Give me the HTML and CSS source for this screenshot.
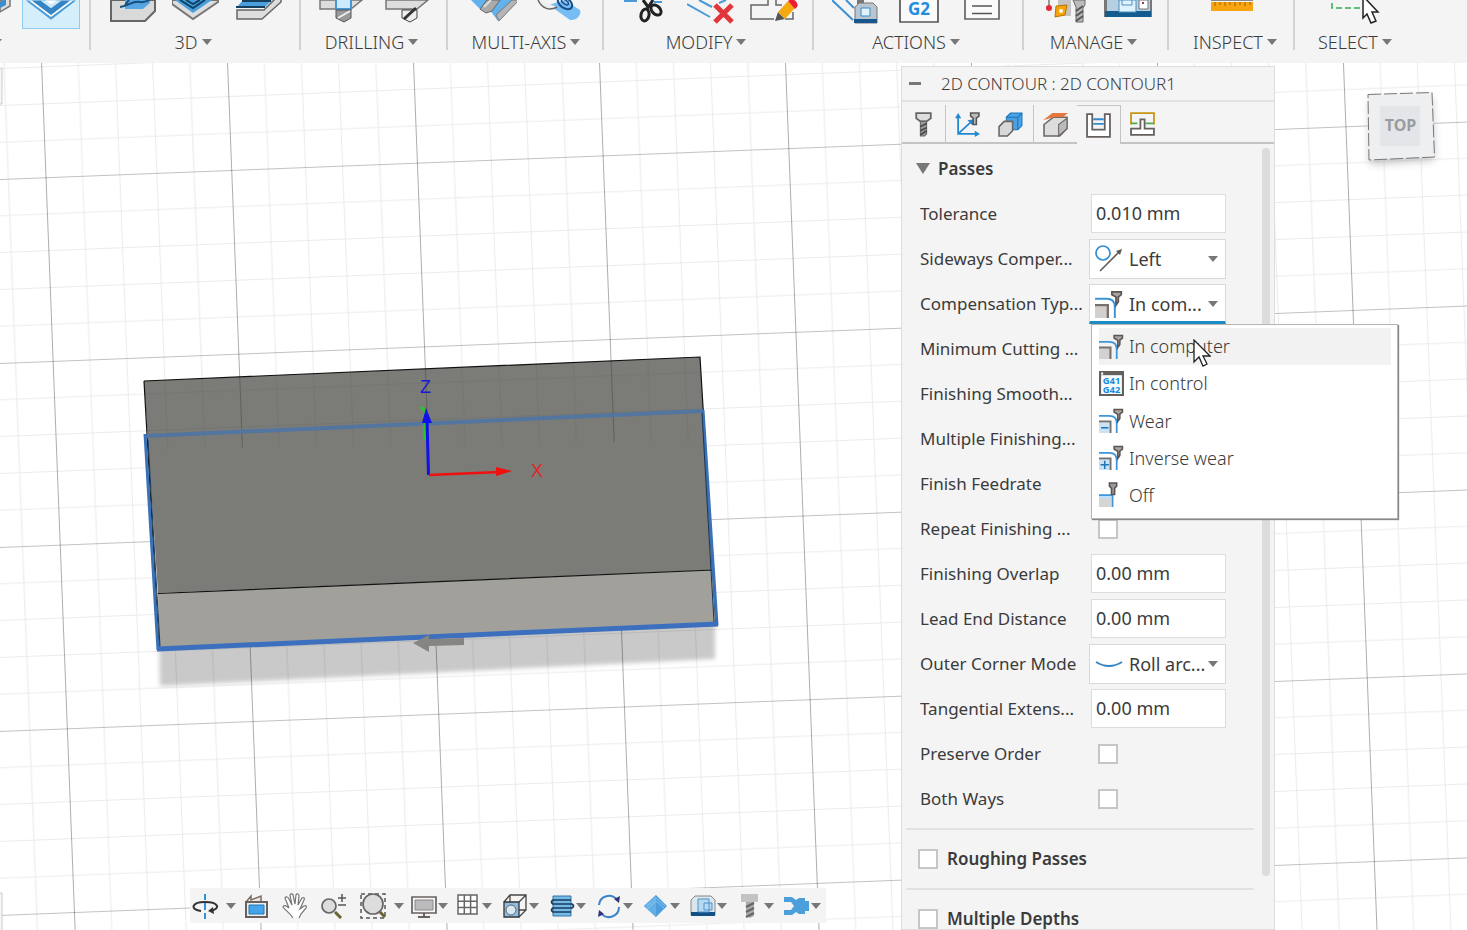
FILE: index.html
```html
<!DOCTYPE html>
<html lang="en">
<head>
<meta charset="utf-8">
<title>2D Contour</title>
<link rel="stylesheet" href="styles.css">
</head>
<body>
<svg class="defs" aria-hidden="true">
  <defs>
    <symbol id="holder" viewBox="0 0 24 24"><path d="M14.500 1.500h8v2.500l-2.500 2v4l-2 3v-7l-3.500-2z" fill="#aaa4a0" stroke="#5b5653" stroke-width="1.500"/></symbol>
    <symbol id="comp" viewBox="0 0 24 24">
      <path d="M0 13h11v11H0z" fill="#d3d1cf"/><path d="M0 13h11v11" fill="none" stroke="#77716d" stroke-width="2"/>
      <path d="M0 7.500h10q7 0 7 7V24" fill="none" stroke="#3d95da" stroke-width="1.700"/><use href="#holder" width="24" height="24"/>
    </symbol>
    <symbol id="gcode" viewBox="0 0 24 24">
      <path d="M1 1h22v22H1z" fill="#f5fbff" stroke="#65605c" stroke-width="2"/><path d="M1 1h22v3H1z" fill="#65605c"/><path d="M2 1.500h2v2H2z" fill="#fff"/>
      <text x="12" y="12.500" class="gcode-text">G41</text><text x="12" y="21" class="gcode-text">G42</text>
    </symbol>
    <symbol id="minus" viewBox="0 0 24 24"><use href="#comp" width="24" height="24"/><path d="M0 14h10v10H0z" fill="#cbe3f5"/><path d="M2 19h7" stroke="#1c78bd" stroke-width="1.500"/></symbol>
    <symbol id="plus" viewBox="0 0 24 24"><use href="#comp" width="24" height="24"/><path d="M0 14h10v10H0z" fill="#cbe3f5"/><path d="M1.500 19h8M5.500 15v8" stroke="#1c78bd" stroke-width="1.500"/></symbol>
    <symbol id="off" viewBox="0 0 24 24"><path d="M0 13h12v11H0z" fill="#d5d5d3"/><path d="M0 13h12v3H0z" fill="#bfe0f8"/><path d="M0 12.500h13V24" fill="none" stroke="#3d95da" stroke-width="1.700"/><path d="M10 1h7v3l-2 2v6h-3V6l-2-2z" fill="#999" stroke="#5b5653" stroke-width="1.500"/></symbol>
    <symbol id="left" viewBox="0 0 28 28"><circle cx="8" cy="8" r="7" fill="#fff" stroke="#2f8fd6" stroke-width="1.700"/><path d="M5 26L24 7" stroke="#6c605a" stroke-width="1.700"/><path d="M27 4l-2 6-4-4z" fill="#5e5652"/></symbol>
    <symbol id="arc" viewBox="0 0 28 28"><path d="M1 12Q14 20 27 12" fill="none" stroke="#3482c4" stroke-width="2"/></symbol>
    <symbol id="tool" viewBox="0 0 24 24"><path d="M5 1h14v5l-4 3H9L5 6z" fill="#ddd" stroke="#666" stroke-width="1.700"/><path d="M9 9h6v12l-2 2h-4z" fill="#999" stroke="#666"/><path d="M9 14l6-3M9 18l6-3M9 22l6-4" stroke="#444" stroke-width="1.500"/></symbol>
  </defs>
</svg>

<header class="toolbar">
  <section class="group group-2d">
    <div class="icons">
      <svg class="frag" viewBox="0 0 12 28"><path d="M0 1l10-4v9L0 12z" fill="#ddd" stroke="#777" stroke-width="1.500"/><path d="M0 2l6-3v6l-6 3z" fill="#3b8ccc"/></svg>
      <button class="selected" aria-label="2D Contour"><svg viewBox="0 0 58 28"><path d="M3 0L29 20 55 0z" fill="#4b9bd8"/><path d="M6 0L29 17 52 0z" fill="#fff"/><path d="M9 0L29 15 49 0z" fill="#3584c4"/><path d="M18 0L29 8 40 0z" fill="#cdeafb"/><path d="M23 0l6 4 6-4z" fill="#fff"/></svg></button>
    </div>
    <div class="caption"><i class="caret edge"></i></div>
  </section>
  <section class="group group-3d">
    <div class="icons">
      <svg viewBox="0 0 48 28"><path d="M2 0v21h34l10-10V0z" fill="#d9d9d9" stroke="#666" stroke-width="2"/><path d="M16 0v9h18l7-6V0z" fill="#55a6e2"/><path d="M11 7c9-1 13-7 20-5 7 1 9-2 12-4M20 0l-4 5" fill="none" stroke="#15507d" stroke-width="2"/></svg>
      <svg viewBox="0 0 48 28"><path d="M0 0v4l21 15L46 2V0z" fill="#ddd" stroke="#777" stroke-width="2"/><path d="M3 0l18 13L40 0z" fill="#4a9fdb"/><path d="M8 0l13 8L33 0M14 0l7 4 7-4" fill="none" stroke="#0e4267" stroke-width="2"/></svg>
      <svg viewBox="0 0 48 28"><path d="M2 10h27L41-2h5v4L27 19H2z" fill="#ddd" stroke="#666" stroke-width="1.500"/><path d="M8 0h29l-7 7H2z" fill="#4b9fdc"/><path d="M1 7h29M7 1h29" stroke="#173f5d" stroke-width="2"/></svg>
    </div>
    <button class="caption">3D<i class="caret"></i></button>
  </section>
  <section class="group group-drill">
    <div class="icons">
      <svg viewBox="0 0 48 28"><path d="M2 0v9h31l11-9z" fill="#ddd" stroke="#777" stroke-width="1.500"/><path d="M18 0v9h15V0" fill="#cdeafb" stroke="#4298d5" stroke-width="2"/><path d="M18 10h15v8l-7 4-8-4z" fill="#999" stroke="#555"/><path d="M20 18l12-7" stroke="#eee" stroke-width="2"/></svg>
      <svg viewBox="0 0 48 28"><path d="M2 0v9h31l11-9z" fill="#ddd" stroke="#777" stroke-width="1.500"/><path d="M18 10h15v8l-7 4-8-4z" fill="#eee" stroke="#444"/><path d="M20 19L32 8" stroke="#333" stroke-width="3"/></svg>
    </div>
    <button class="caption">DRILLING<i class="caret"></i></button>
  </section>
  <section class="group group-axis">
    <div class="icons">
      <svg viewBox="0 0 48 28"><path d="M2 0l9 9h9l9 12L47 3V0z" fill="#62b2ee"/><path d="M11 9l6 4 6-2L31 0H18z" fill="#aaa" stroke="#666"/><path d="M15 7L22 0" stroke="#ddd" stroke-width="2"/><path d="M27 15l3 6L50 0h-7z" fill="#b5b5b5" stroke="#777"/></svg>
      <svg viewBox="0 0 48 28"><path d="M14 5L29 0l16 10c2 5-4 11-10 10z" fill="#77bdf3"/><path d="M3 0c4 9 12 11 19 7" fill="#eee" stroke="#666" stroke-width="1.500"/><ellipse cx="30" cy="3" rx="8" ry="5" transform="rotate(35 30 3)" fill="none" stroke="#164e87" stroke-width="2"/><ellipse cx="30" cy="2" rx="4" ry="2" transform="rotate(35 30 2)" fill="none" stroke="#164e87" stroke-width="1.500"/></svg>
    </div>
    <button class="caption">MULTI-AXIS<i class="caret"></i></button>
  </section>
  <section class="group group-modify">
    <div class="icons">
      <svg viewBox="0 0 48 28"><path d="M0 1h13M30 2h8" stroke="#4b99d6" stroke-width="2"/><path d="M19 0l6 8M29 0l-6 9" stroke="#222" stroke-width="3"/><ellipse cx="21" cy="15" rx="4" ry="6" transform="rotate(12 21 15)" fill="none" stroke="#222" stroke-width="3"/><ellipse cx="32" cy="10" rx="4" ry="6" transform="rotate(-45 32 10)" fill="none" stroke="#222" stroke-width="3"/></svg>
      <svg viewBox="0 0 48 28"><path d="M0 4l23 13M12 0l13 7M32 3l7-3" stroke="#4b99d6" stroke-width="2"/><path d="M28 5l17 17M45 5L28 22" stroke="#e0353a" stroke-width="5"/></svg>
      <svg viewBox="0 0 48 28"><path d="M18 0v5H1v14h23M26 0v5h6M43 12v7h-8" fill="none" stroke="#666" stroke-width="1.500"/><path d="M25 21l3-9 7 7z" fill="#555"/><path d="M28 12L38 1l7 7-10 11z" fill="#f6a90f"/><path d="M38 1l3-2c4 0 8 5 6 8l-2 2z" fill="#ed1c35"/></svg>
    </div>
    <button class="caption">MODIFY<i class="caret"></i></button>
  </section>
  <section class="group group-actions">
    <div class="icons">
      <svg viewBox="0 0 48 28"><path d="M0 0l21 20M14 0l8 8" stroke="#3d91d3" stroke-width="2"/><path d="M25 0h7v4h-7z" fill="#777"/><path d="M23 23V7l4-4h14l4 4v16z" fill="#b9c6cf" stroke="#777"/><path d="M22 19h23v4H22z" fill="#15578c"/><path d="M29 8h9v8h-9z" fill="#e2f2fd" stroke="#348bce"/></svg>
      <svg viewBox="0 0 48 28"><path d="M5-2h38v24H5z" fill="#fafafa" stroke="#555" stroke-width="1.700"/><text x="24" y="15" class="g2">G2</text></svg>
      <svg viewBox="0 0 48 28"><path d="M7-2h34v21H7z" fill="#fafafa" stroke="#666" stroke-width="1.700"/><path d="M14 6h20M14 13.500h20" stroke="#555" stroke-width="1.500"/></svg>
    </div>
    <button class="caption">ACTIONS<i class="caret"></i></button>
  </section>
  <section class="group group-manage">
    <div class="icons">
      <svg viewBox="0 0 48 28"><path d="M8 0v7" stroke="#999" stroke-width="2"/><circle cx="8" cy="8" r="3" fill="#e6283a"/><path d="M17 0h13v16H17z" fill="#c4c4c4"/><path d="M15 6l11-1-2 10-10 2z" fill="#f6a40b" stroke="#bd7600"/><circle cx="20" cy="11" r="2" fill="#fff"/><path d="M32 0h12v5l-2 3v14h-7V7z" fill="#bbb" stroke="#666"/><path d="M35 11l7-5M35 16l7-5M35 21l7-5" stroke="#555" stroke-width="2"/></svg>
      <svg viewBox="0 0 48 28"><path d="M0 0h48v17H0z" fill="#b5cfe0"/><path d="M0 0h3v17H0zM46 0h2v17h-2z" fill="#777"/><path d="M1 11h46v6H1z" fill="#145b90"/><path d="M15 0h17v12H15z" fill="#dff3ff" stroke="#4d8fc2"/><path d="M18 0v5h10V0" fill="none" stroke="#4d8fc2"/><path d="M35 0h9v9h-9z" fill="#fff" stroke="#777"/><path d="M38 3h2" stroke="#a13676" stroke-width="2"/></svg>
    </div>
    <button class="caption">MANAGE<i class="caret"></i></button>
  </section>
  <section class="group group-inspect">
    <div class="icons"><svg viewBox="0 0 48 28"><path d="M3 0h42" stroke="#888" stroke-width="2"/><path d="M3 2h42v9H3z" fill="#f7a510"/><path d="M7 2v4M12 2v3M17 2v4M22 2v3M27 2v4M32 2v3M37 2v4M42 2v3" stroke="#9b6200"/></svg></div>
    <button class="caption">INSPECT<i class="caret"></i></button>
  </section>
  <section class="group group-select">
    <div class="icons"><svg class="select-icon" viewBox="0 0 60 28"><path d="M9 3v5h32" fill="none" stroke="#38a657" stroke-width="1.500" stroke-dasharray="6 3"/><path d="M40-2v20l4-4 4 9 5-2-4-9h6L40-4z" fill="#fff" stroke="#222" stroke-width="1.500"/></svg></div>
    <button class="caption">SELECT<i class="caret"></i></button>
  </section>
</header>

<main class="workspace">
  <svg class="canvas" viewBox="0 63 2400 1600" preserveAspectRatio="xMinYMin slice" role="img" aria-label="Model view">
    <defs>
      <pattern id="grid" width="185.700" height="183.700" patternUnits="userSpaceOnUse" patternTransform="matrix(1 -.0392 .0387 1 416.900 162.700)">
        <path d="M37.140 0v184M74.280 0v184M111.420 0v184M148.560 0v184M0 36.740h186M0 73.480h186M0 110.220h186M0 146.960h186" stroke="#000" stroke-opacity=".08"/>
        <path d="M.5 0v184" stroke="#000" stroke-opacity=".32"/><path d="M0 .5h186" stroke="#000" stroke-opacity=".24"/>
      </pattern>
      <filter id="soft"><feGaussianBlur stdDeviation="2"/></filter>
      <filter id="cube-shadow" x="-30%" y="-30%" width="160%" height="170%"><feGaussianBlur stdDeviation="4"/></filter>
    </defs>
    <rect y="63" width="2400" height="1600" fill="#fff"/>
    <path d="M159 640L715 620V659L160 686z" fill="#c9c9c9" filter="url(#soft)"/>
    <rect y="63" width="2400" height="1600" fill="url(#grid)"/>
    <path d="M144 381L700 357 713 570 158 593z" fill="#7b7b77"/>
    <path d="M144 381L700 357 706 441 148 449z" fill="url(#grid)" opacity=".7"/>
    <path d="M158 593L713 570 716 624 159 648z" fill="#a1a09b"/>
    <path d="M144 381L700 357 716 624M144 381L159 648M158 593.500L713 570" fill="none" stroke="#111" stroke-width="1.200"/>
    <path d="M146 436L703 411" stroke="#52769f" stroke-width="4"/>
    <path d="M145 434L158 650M703 410L717 625" stroke="#3972b7" stroke-width="3"/>
    <path d="M148 440L160 646M702 413L714 622" stroke="#17365a" stroke-width="1"/>
    <path d="M157 649L718 624" stroke="#3c6fbe" stroke-width="5"/>
    <path d="M413 643l16-8v4l35-1v7l-35 1v6z" fill="#858583"/>
    <path d="M421 407l5 5M425 412v28" stroke="#2bc52b" stroke-width="3"/>
    <path d="M428.500 475L427 420" stroke="#1010e8" stroke-width="3"/><path d="M426 408l6 15h-10z" fill="#1010e8"/>
    <path d="M429 475L500 472" stroke="#f01010" stroke-width="2.500"/><path d="M512 471l-16-4v9z" fill="#f01010"/>
    <text x="425.500" y="393" class="axis axis-z">Z</text><text x="537" y="477" class="axis axis-x">X</text>
    <path d="M0 68h2v36H0M0 893h2v40H0" fill="#f6f6f6" stroke="#ccc"/>
    <path d="M1370 100L1432 98 1434 160 1370 164z" fill="#999" filter="url(#cube-shadow)" opacity=".6"/>
    <path d="M1368 94.500L1432 92.500 1434.500 157 1369 160z" fill="#eeeff1"/>
    <path d="M1368 94.500L1432 92.500 1434.500 157 1369 160z" fill="none" stroke="#777" stroke-dasharray="13 3"/>
    <path d="M1380 106h40v40h-40z" fill="#e4e5e8"/>
    <text x="1400.500" y="131" class="cube-text">TOP</text>
  </svg>

  <aside class="panel">
    <header class="panel-head"><button class="collapse" aria-label="Collapse"></button><h1>2D CONTOUR : 2D CONTOUR1</h1></header>
    <nav class="tabs">
      <button class="tab sep" aria-label="Tool"><svg viewBox="0 0 24 24"><use href="#tool"/></svg></button>
      <button class="tab" aria-label="Setup"><svg viewBox="0 0 24 24"><path d="M3 3v18h18M4 20L16 9" fill="none" stroke="#2189d1" stroke-width="1.700"/><path d="M3 1L0 6h6zM24 21l-5-3v6zM18 7l-6 1 5 5z" fill="#2189d1"/><path d="M15 1h8v3l-2.500 2v6h-3V6L15 4z" fill="#bbb" stroke="#5b5653" stroke-width="1.500"/></svg></button>
      <button class="tab sep" aria-label="Geometry"><svg viewBox="0 0 24 24"><path d="M8 5l4-4h11v12l-4 4H8z" fill="#4aa2e4" stroke="#1b74b9"/><path d="M8 5h11v12M19 5l4-4" fill="none" stroke="#1b74b9"/><path d="M1 23V14l5-5h8v9l-5 5z" fill="#d8d8d8" stroke="#666" stroke-width="1.500"/></svg></button>
      <button class="tab" aria-label="Heights"><svg viewBox="0 0 24 24"><path d="M1 12L10 5h13v11l-7 7H1z" fill="#ddd" stroke="#6b6663" stroke-width="1.500"/><path d="M15 12v11l8-7V6z" fill="#bbb" stroke="#6b6663"/><path d="M0 8l9-7h15l-5 4H10z" fill="#e5763c"/></svg></button>
      <button class="tab active" aria-label="Passes"><svg viewBox="0 0 24 24"><path d="M1 1h5v15h12V1h5v22H1z" fill="#fff" stroke="#65605d" stroke-width="1.700"/><path d="M7 6h10M7 10.500h10" stroke="#3289ca" stroke-width="1.700"/></svg></button>
      <button class="tab" aria-label="Linking"><svg viewBox="0 0 24 24"><path d="M1 12V1h22v11" fill="none" stroke="#c69414" stroke-width="1.700"/><path d="M1 11h6M15 11h8" stroke="#4ea94d" stroke-width="1.700"/><path d="M10 7h4v9h9v6H1v-6h9z" fill="#fff" stroke="#65605d" stroke-width="1.700"/></svg></button>
    </nav>
    <div class="scroll"></div>
    <form class="form">
      <button type="button" class="section-title"><i class="disclosure"></i>Passes</button>
      <div class="row"><label for="tol">Tolerance</label><input id="tol" type="text" value="0.010 mm"></div>
      <div class="row"><label for="side">Sideways Comper...</label><div class="pick"><select id="side"><option>Left</option></select><svg viewBox="0 0 28 28"><use href="#left"/></svg><i class="caret"></i></div></div>
      <div class="row"><label for="type">Compensation Typ...</label><div class="pick open"><select id="type"><option>In com...</option></select><svg viewBox="0 0 24 24"><use href="#comp"/></svg><i class="caret"></i>
        <ul class="menu">
          <li><button type="button" class="hover"><svg viewBox="0 0 24 24"><use href="#comp"/></svg>In computer</button></li>
          <li><button type="button"><svg viewBox="0 0 24 24"><use href="#gcode"/></svg>In control</button></li>
          <li><button type="button"><svg viewBox="0 0 24 24"><use href="#minus"/></svg>Wear</button></li>
          <li><button type="button"><svg viewBox="0 0 24 24"><use href="#plus"/></svg>Inverse wear</button></li>
          <li><button type="button"><svg viewBox="0 0 24 24"><use href="#off"/></svg>Off</button></li>
        </ul>
        <svg class="cursor" viewBox="0 0 18 28"><path d="M1 1v22l5-5 4 9 4-2-4-8h7z" fill="#fff" stroke="#222" stroke-width="1.300"/></svg>
      </div></div>
      <div class="row"><label for="rad">Minimum Cutting ...</label><input id="rad" type="checkbox"></div>
      <div class="row"><label for="smooth">Finishing Smooth...</label><input id="smooth" type="checkbox"></div>
      <div class="row"><label for="multi">Multiple Finishing...</label><input id="multi" type="checkbox"></div>
      <div class="row"><label for="feed">Finish Feedrate</label><input id="feed" type="checkbox"></div>
      <div class="row"><label for="rep">Repeat Finishing ...</label><input id="rep" type="checkbox"></div>
      <div class="row"><label for="over">Finishing Overlap</label><input id="over" type="text" value="0.00 mm"></div>
      <div class="row"><label for="lead">Lead End Distance</label><input id="lead" type="text" value="0.00 mm"></div>
      <div class="row"><label for="corner">Outer Corner Mode</label><div class="pick"><select id="corner"><option>Roll arc...</option></select><svg viewBox="0 0 28 28"><use href="#arc"/></svg><i class="caret"></i></div></div>
      <div class="row"><label for="tan">Tangential Extens...</label><input id="tan" type="text" value="0.00 mm"></div>
      <div class="row"><label for="order">Preserve Order</label><input id="order" type="checkbox"></div>
      <div class="row"><label for="both">Both Ways</label><input id="both" type="checkbox"></div>
      <label class="block"><input type="checkbox">Roughing Passes</label>
      <label class="block"><input type="checkbox">Multiple Depths</label>
    </form>
  </aside>

  <nav class="navbar">
    <button class="wide" aria-label="Orbit"><svg viewBox="0 0 26 26"><path d="M9 18C-2 17-1 9 13 9s16 7 5 9" fill="none" stroke="#333" stroke-width="2"/><path d="M13 1v6M13 10v7M13 20v6" stroke="#2d93db" stroke-width="2"/><path d="M21 14l-5 4 6 3z" fill="#333"/></svg><i class="caret"></i></button>
    <button aria-label="Look at"><svg viewBox="0 0 26 26"><path d="M3 9l5-6v4l10-4v6" fill="#e9e5e2" stroke="#7d6b61" stroke-width="1.500"/><path d="M3 9h21v15H3z" fill="#eee" stroke="#68625e" stroke-width="2"/><path d="M6 12h15v9H6z" fill="#46a4ea" stroke="#2078b8"/></svg></button>
    <button aria-label="Pan"><svg viewBox="0 0 26 26"><path d="M11 25C8 20 3 17 1 14c0-2 3-2 6 1L3 5c1-2 3-1 4 1l3 6L8 2c1-2 3-1 3 0l2 9 1-9c1-2 3-1 3 1l-1 9 4-7c2-1 3 0 2 2l-4 9 4-3c2-1 3 0 2 2l-5 6-2 4" fill="#fff" stroke="#767676" stroke-width="1.200"/></svg></button>
    <button aria-label="Zoom"><svg viewBox="0 0 26 26"><circle cx="8" cy="13" r="7" fill="#ddd" stroke="#666" stroke-width="1.700"/><path d="M14 19l6 6" stroke="#6a6531" stroke-width="3"/><path d="M17 5h8M21 1v8M17 12h8" stroke="#555" stroke-width="1.500"/></svg></button>
    <button class="wide" aria-label="Fit"><svg viewBox="0 0 26 26"><path d="M1 1h24v24H1z" fill="none" stroke="#555" stroke-width="1.500" stroke-dasharray="4 3"/><circle cx="13" cy="11" r="10" fill="#ddd" stroke="#666" stroke-width="1.700"/><path d="M20 19l5 5" stroke="#6a6531" stroke-width="3"/></svg><i class="caret"></i></button>
    <button class="tight" aria-label="Display"><svg viewBox="0 0 26 26"><path d="M1 4h24v16H1z" fill="#f6f6f6" stroke="#68625e" stroke-width="1.700"/><path d="M4 7h18v10H4z" fill="#bbb" stroke="#888"/><path d="M13 20v4M7 24h12" stroke="#68625e" stroke-width="2"/></svg><i class="caret"></i></button>
    <button class="carets" aria-label="Grid"><svg viewBox="0 0 26 26"><path d="M3 2h19v19H3zM9.300 2v19M15.600 2v19M3 8.300h19M3 14.600h19" fill="#fff" stroke="#666" stroke-width="1.500"/></svg><i class="caret"></i></button>
    <button class="carets" aria-label="Section"><svg viewBox="0 0 26 26"><path d="M2 9l6-7h16v15l-7 7M17 9l7-7M8 2v7M17 17h7" fill="none" stroke="#444" stroke-width="1.300"/><path d="M2 9h15v15H2z" fill="#8fbde3" stroke="#333" stroke-width="1.300"/><circle cx="9" cy="17" r="5" fill="#dce8f0" stroke="#567"/></svg><i class="caret"></i></button>
    <button class="carets" aria-label="Toolpath"><svg viewBox="0 0 26 26"><path d="M4 3h18v20H4z" fill="#75b9e9" stroke="#34779f"/><path d="M22 7H4q-3 2 0 4h19q3 2 0 4H4q-3 2 0 4h18" fill="none" stroke="#193d5b" stroke-width="1.700"/></svg><i class="caret"></i></button>
    <button class="carets" aria-label="Refresh"><svg viewBox="0 0 26 26"><path d="M3 12A10 10 0 0 1 21 7M23 14A10 10 0 0 1 5 20" fill="none" stroke="#3b83cb" stroke-width="2"/><path d="M24 3l-1 7-5-4zM2 24l1-7 5 4z" fill="#303475"/></svg><i class="caret"></i></button>
    <button class="carets" aria-label="Stock"><svg viewBox="0 0 26 26"><path d="M1 13L13 2l11 11-11 11z" fill="#4c9ddc"/><path d="M1 13L13 2v22z" fill="#64aee6"/><path d="M4 13l9-8 9 8M4 16l9-8 9 8" fill="none" stroke="#8bc6f0"/></svg><i class="caret"></i></button>
    <button class="carets" aria-label="Machine"><svg viewBox="0 0 26 26"><path d="M1 22V7l4-4h16l4 4v15z" fill="#dce5ea" stroke="#888"/><path d="M1 19h24v4H1z" fill="#135184"/><path d="M8 6h11v13H8zM14 10h8v7h-8z" fill="#b8daf0" stroke="#4c92c9"/></svg><i class="caret"></i></button>
    <button class="carets" aria-label="Tool view"><svg viewBox="0 0 26 26"><path d="M4 1h17v8H4z" fill="#c3c3c3"/><path d="M9 9h8v14l-4 2-4-2z" fill="#aaa"/><path d="M9 14l8-4M9 19l8-4M9 24l8-4" stroke="#666" stroke-width="2"/></svg><i class="caret"></i></button>
    <button class="last" aria-label="Fixture"><svg viewBox="0 0 26 26"><path d="M0 4h8l4 3 3-2h6v3h4v10h-4v3h-6l-3-2-4 3H0v-5h7l3-4-3-4H0z" fill="#4b9fda"/></svg><i class="caret"></i></button>
  </nav>
</main>
</body>
</html>
```
FILE: styles.css
```css
* { box-sizing: border-box; }
body {
  margin: 0;
  height: 100vh;
  display: flex;
  flex-direction: column;
  overflow: hidden;
  background: #fff;
  color: #3b3b3b;
  font: 17px/24px "Noto Sans", "Open Sans", sans-serif;
}
button, input, select { font: inherit; color: inherit; margin: 0; }
button { border: 0; padding: 0; background: none; }
svg { display: block; flex: none; }
.defs { position: absolute; width: 0; height: 0; }
.caret {
  display: block;
  flex: none;
  border: 5px solid transparent;
  border-top: 6px solid #777;
  border-bottom: 0;
}

/* Toolbar */
.toolbar {
  display: flex;
  flex: none;
  height: 63px;
  background: #f4f4f4;
  overflow: hidden;
}
.group { position: relative; flex: none; }
.group:not(:last-child)::after {
  content: "";
  position: absolute;
  top: 0;
  right: 0;
  width: 2px;
  height: 50px;
  background: #d2d2d2;
}
.group-2d { width: 91px; }
.group-3d, .group-modify, .group-actions { width: 210px; }
.group-drill { width: 147px; }
.group-axis { width: 156px; }
.group-manage { width: 145px; }
.group-inspect { width: 126px; }
.group-select { flex: 1; padding-left: 20px; }
.icons { display: flex; justify-content: center; gap: 15px; height: 29px; }
.icons svg { width: 48px; height: 28px; }
.group-2d .icons { justify-content: flex-start; gap: 10px; }
.group-drill .icons, .group-axis .icons { gap: 18px; }
.group-modify .icons { padding-left: 4px; }
.icons .frag { width: 12px; }
.selected { width: 58px; height: 29px; background: #d5eefc; border: 1px solid #8ecdf0; border-top: 0; }
.selected svg { width: 56px; }
.group-select .icons { justify-content: flex-start; padding-left: 8px; }
.icons .select-icon { width: 60px; }
.caption {
  display: flex;
  align-items: center;
  justify-content: center;
  gap: 4px;
  width: 100%;
  height: 25px;
  padding-right: 6px;
  font-size: 18px;
  font-weight: 300;
}
.group-inspect .caption { padding: 0 0 0 6px; }
.group-axis .caption { padding: 0; }
.group-select .caption { justify-content: flex-start; padding-left: 3px; }
.group-2d .caption { justify-content: flex-start; }
.caret.edge { margin-left: -8px; }

/* Workspace */
.workspace { position: relative; flex: 1; min-height: 0; overflow: hidden; }
.canvas { position: absolute; top: 0; left: 0; width: 2400px; height: 1600px; }
.axis { font: 18px "Liberation Sans", sans-serif; text-anchor: middle; }
.axis-z { fill: #1818d8; }
.axis-x { fill: #dd2828; }
.cube-text { font: bold 16px "Liberation Sans Narrow", "Noto Sans", sans-serif; text-anchor: middle; fill: #999ca1; }
.g2 { font: bold 17px "Noto Sans", sans-serif; text-anchor: middle; fill: #208de0; }
.gcode-text { font: bold 9px "Noto Sans", sans-serif; text-anchor: middle; fill: #168ce0; }

/* Panel */
.panel {
  position: absolute;
  top: 3px;
  right: 192px;
  bottom: 0;
  width: 374px;
  background: #f4f4f4;
  border: 1px solid #ddd;
}
.panel-head {
  display: flex;
  align-items: center;
  gap: 20px;
  height: 35px;
  padding-left: 7px;
  border-bottom: 2px solid #e2e2e2;
}
.panel-head h1 { margin: 0; font-size: 17px; font-weight: 300; }
.collapse { width: 12px; height: 3px; background: #777; }
.tabs { display: flex; height: 42px; border-bottom: 2px solid #c4c4c4; padding: 3px 110px 0 0; }
.tab { display: flex; align-items: center; justify-content: center; flex: 1; height: 39px; }
.tab svg { width: 25px; height: 25px; }
.tab.sep { height: 37px; padding-top: 2px; border-right: 1px solid #c4c4c4; }
.tab.active { background: #f4f4f4; border: 1px solid #c4c4c4; border-width: 1px 1px 0 0; }
.scroll { position: absolute; right: 4px; top: 81px; width: 8px; height: 728px; background: #dcdcdc; border-radius: 4px; }
.form { padding: 2px 20px 0 0; }
.section-title {
  display: flex;
  align-items: center;
  gap: 8px;
  height: 45px;
  padding-left: 14px;
  font-weight: 600;
}
.disclosure { border: 7px solid transparent; border-top: 11px solid #777; border-bottom: 0; }
.row {
  display: grid;
  grid-template-columns: 163px 1fr;
  align-items: center;
  gap: 6px;
  height: 45px;
  padding: 0 28px 0 18px;
}
.row label { white-space: nowrap; }
input[type="text"] {
  height: 39px;
  width: auto;
  min-width: 0;
  margin-left: 2px;
  padding: 0 4px 2px;
  border: 1px solid #ddd;
  background: #fff;
  font-size: 18px;
}
input[type="checkbox"] {
  appearance: none;
  flex: none;
  width: 20px;
  height: 20px;
  margin-left: 9px;
  border: 2px solid #c6c6c6;
  background: #fff;
}
.pick { position: relative; }
.pick select {
  appearance: none;
  display: block;
  width: 100%;
  height: 40px;
  padding: 0 16px 0 39px;
  border: 1px solid #d9d9d9;
  border-radius: 0;
  background: #fff;
  font-size: 18px;
  white-space: nowrap;
}
.pick.open select { padding-top: 2px; border-bottom: 3px solid #1b8cc4; }
.pick > svg { position: absolute; left: 6px; top: 6px; width: 28px; height: 28px; pointer-events: none; }
.pick > .caret { position: absolute; right: 8px; top: 17px; pointer-events: none; }
.menu {
  position: absolute;
  z-index: 2;
  top: 100%;
  left: 2px;
  display: flex;
  flex-direction: column;
  width: 307px;
  height: 195px;
  margin: 0;
  padding: 3px 6px 4px 7px;
  list-style: none;
  background: #fff;
  border: 1px solid #b5b5b5;
  box-shadow: 1px 1px 1px #888;
  font-size: 18px;
}
.menu li { flex: 1; display: flex; }
.menu button { display: flex; align-items: center; gap: 5px; width: 100%; font-weight: 300; }
.menu .hover { background: #f2f2f2; }
.menu svg { width: 25px; height: 25px; }
.pick > .cursor { z-index: 3; left: 104px; top: 55px; width: 18px; }
.block {
  display: flex;
  align-items: center;
  gap: 9px;
  height: 60px;
  margin-left: 4px;
  padding-left: 3px;
  border-top: 2px solid #e2e2e2;
  font-weight: 600;
}
.row:has(+ .block) { margin-bottom: 7px; }

/* View navigation */
.navbar {
  position: absolute;
  left: 190px;
  bottom: 7px;
  display: flex;
  padding: 5px 0 4px 2px;
  background: #f4f4f4;
}
.navbar button { display: flex; align-items: center; gap: 1px; width: 39px; height: 26px; flex: none; }
.navbar svg { width: 26px; height: 26px; }
.navbar .wide { width: 51px; gap: 8px; }
.navbar .tight { width: 44px; }
.navbar .carets { width: 47px; }
.navbar .last { width: 42px; }
.block input[type="checkbox"] { margin-left: 9px; }
```
